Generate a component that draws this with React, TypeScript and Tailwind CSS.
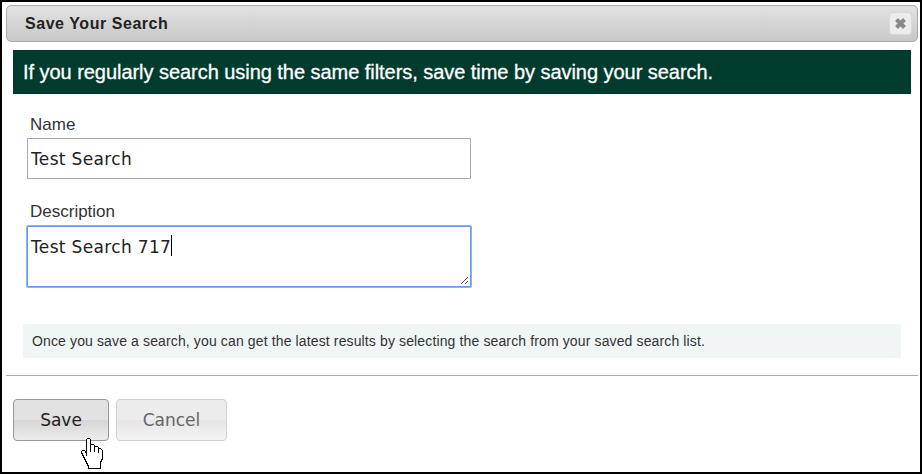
function HandCursor() {
  return (
    <svg className="absolute left-[68px] top-[39px]" width="24" height="32" viewBox="0 0 24 32" shapeRendering="crispEdges">
      <path
        d="M6.5 0.5 H8.5 L9.5 1.5 V6.5 H12.5 L13.5 7.5 V8.5 H16.5 L17.5 9.5 V10.5 H19.5 L21.5 12.5 V20.5 L19.5 24.5 V30.5 H7.5 V28.5 L3.5 20.5 L0.5 14.5 V13.5 L1.5 12.5 H3.5 L5.5 15.5 V17.5 V1.5 Z"
        fill="#fff"
        stroke="#000"
      />
      <path d="M9.5 6V14 M13.5 8V14 M17.5 10V15" stroke="#000" fill="none" />
    </svg>
  );
}

export default function App() {
  return (
    <div className="relative h-[474px] w-[922px] overflow-hidden border-2 border-black bg-white px-1 pt-[3px] font-['Liberation_Sans',Arial,sans-serif] text-[#333]">
      <header className="flex h-[37px] w-[912px] items-start justify-between rounded-[5px] border border-[#aaa] bg-linear-to-b from-[#e2e2e2] to-[#c8c8c8] pt-[6px] pr-[5px] pl-[18px]">
        <h1 className="pt-[2px] text-[16px] leading-5 font-bold tracking-[0.55px] text-[#222]">Save Your Search</h1>
        <button aria-label="Close" className="flex h-[23px] w-[23px] items-center justify-center rounded-[4px] border border-[#d8d8d8] bg-[#ececec]">
          <svg width="13" height="13" viewBox="0 0 13 13">
            <path d="M2.5 2.5 L10.5 10.5 M10.5 2.5 L2.5 10.5" stroke="#888" strokeWidth="4" />
          </svg>
        </button>
      </header>

      <div className="mt-2 ml-[7px] flex h-[44px] w-[898px] items-center bg-[#003c2d] pl-[10px]">
        <p className="text-[20px] leading-6 tracking-[-0.045px] whitespace-nowrap text-white [-webkit-text-stroke:0.3px_white]">
          If you regularly search using the same filters, save time by saving your search.
        </p>
      </div>

      <form className="ml-[21px] pt-[21px]">
        <label className="block h-[23px] pl-[3px] text-[17px] leading-[20px]">Name</label>
        <input
          className="block h-[41px] w-[444px] border border-[#a9a9a9] bg-white pt-[1px] pl-[3px] font-['DejaVu_Sans',Verdana,sans-serif] text-[17px] tracking-[0.34px] text-[#222] outline-none"
          defaultValue="Test Search"
        />
        <label className="mt-[23px] block h-[24px] pl-[3px] text-[17px] leading-[20px]">Description</label>
        <div className="relative h-[61px] w-[444px]">
          <textarea
            className="block h-[61px] w-[444px] resize-none rounded-[1px] border border-[#6699e8] bg-white pt-[10px] pl-[3px] font-['DejaVu_Sans',Verdana,sans-serif] text-[17px] leading-[20px] tracking-[0.34px] text-[#222] ring-1 ring-[#8ab4f5] outline-none"
            defaultValue="Test Search 717"
          />
          <span className="absolute top-[9px] left-[144px] h-[21px] w-px bg-black" />
          <svg className="absolute right-[3px] bottom-[3px]" width="7" height="7" viewBox="0 0 7 7" shapeRendering="crispEdges">
            <path d="M0 7 L7 0 M4 7 L7 4" stroke="#555" />
          </svg>
        </div>
      </form>

      <div className="mt-[37px] ml-[17px] flex h-[34px] w-[878px] items-center bg-[#f0f6f6] pl-[9px]">
        <p className="text-[14px] leading-5 tracking-[0.13px] whitespace-nowrap">
          Once you save a search, you can get the latest results by selecting the search from your saved search list.
        </p>
      </div>

      <footer className="relative mt-[17px] flex w-[912px] gap-[7px] border-t border-[#aaa] pt-[23px] pl-[7px] font-['DejaVu_Sans',Verdana,sans-serif] text-[17px]">
        <button className="h-[42px] w-[96px] rounded-[4px] border border-[#999] bg-[linear-gradient(to_bottom,#e2e2e2_0%,#e2e2e2_50%,#d6d6d6_51%,#ececec_100%)] pt-[2px] text-[#222]">
          Save
        </button>
        <button className="h-[42px] w-[111px] rounded-[4px] border border-[#d0d0d0] bg-[linear-gradient(to_bottom,#ececec_0%,#ececec_50%,#e6e6e6_51%,#f4f4f4_100%)] pt-[2px] text-[#666]">
          Cancel
        </button>
        <div className="absolute top-[23px] left-[7px]">
          <HandCursor />
        </div>
      </footer>
    </div>
  );
}
